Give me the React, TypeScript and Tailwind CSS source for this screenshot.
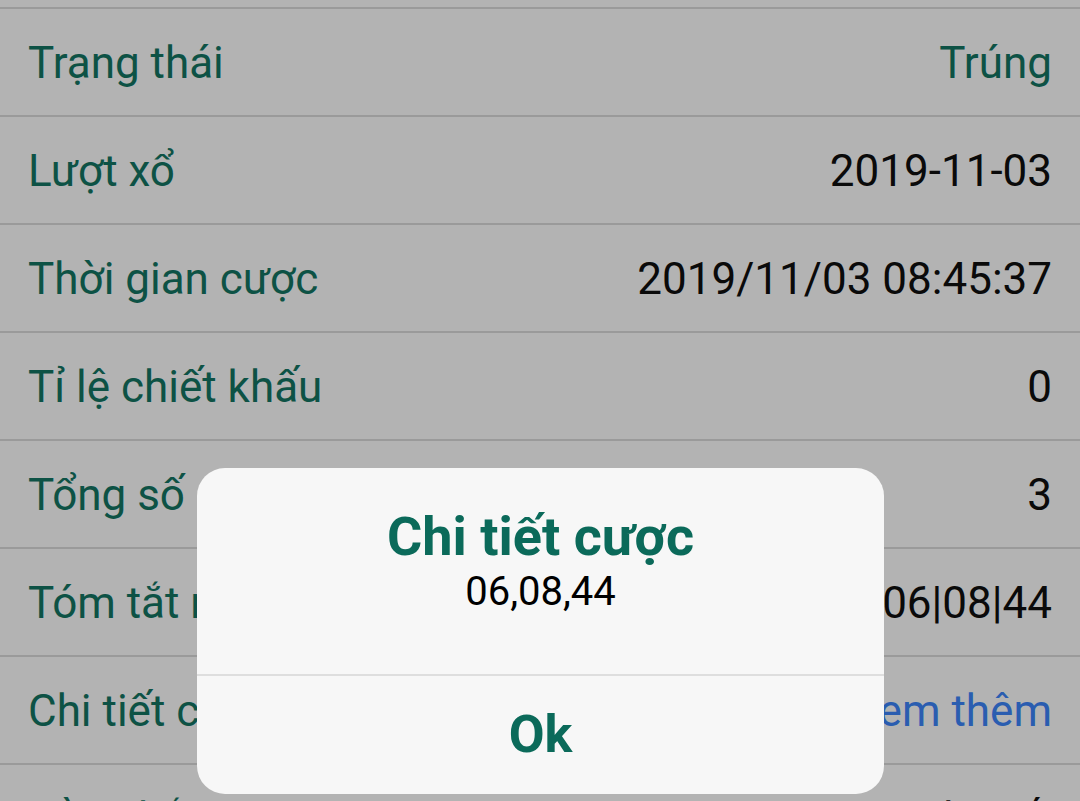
import React from "react";

type Row = { label: string; value: string; tone?: "green" | "blue" | "black" };

const rows: Row[] = [
  { label: "Trạng thái", value: "Trúng", tone: "green" },
  { label: "Lượt xổ", value: "2019-11-03" },
  { label: "Thời gian cược", value: "2019/11/03 08:45:37" },
  { label: "Tỉ lệ chiết khấu", value: "0" },
  { label: "Tổng số cược", value: "3" },
  { label: "Tóm tắt nội dung", value: "06|08|44" },
  { label: "Chi tiết cược", value: "Xem thêm", tone: "blue" },
  { label: "Tiền thắng", value: "Xem chi tiết" },
];

function toneClass(tone?: Row["tone"]) {
  if (tone === "green") return "text-[#0d5245]";
  if (tone === "blue") return "text-[#2a5db0]";
  return "text-[#0a0a0a]";
}

export default function App() {
  return (
    <div
      className="relative h-[801px] w-[1080px] overflow-hidden bg-[#b3b3b3]"
      style={{ fontFamily: "Roboto, 'Noto Sans', sans-serif" }}
    >
      <div className="h-[7px]" />
      {rows.map((r) => (
        <div
          key={r.label}
          className="flex h-[108px] items-center justify-between border-t-2 border-[#9a9a9a] px-[28px] pt-[2px] text-[44px] leading-none"
        >
          <span className="text-[#0d5245]">{r.label}</span>
          <span className={toneClass(r.tone)}>{r.value}</span>
        </div>
      ))}

      <div className="absolute left-[197px] top-[468px] flex h-[326px] w-[687px] flex-col rounded-[28px] bg-[#f7f7f7]">
        <div className="flex h-[206px] flex-col items-center pt-[39px]">
          <div className="text-[54px] font-bold leading-[60px] text-[#0b6a5a]">
            Chi tiết cược
          </div>
          <div className="mt-[3px] text-[40px] leading-[44px] text-black">
            06,08,44
          </div>
        </div>
        <div className="h-[2px] bg-[#dedede]" />
        <button
          type="button"
          className="flex flex-1 items-center justify-center text-[52px] font-bold text-[#0b6a5a]"
        >
          Ok
        </button>
      </div>
    </div>
  );
}
